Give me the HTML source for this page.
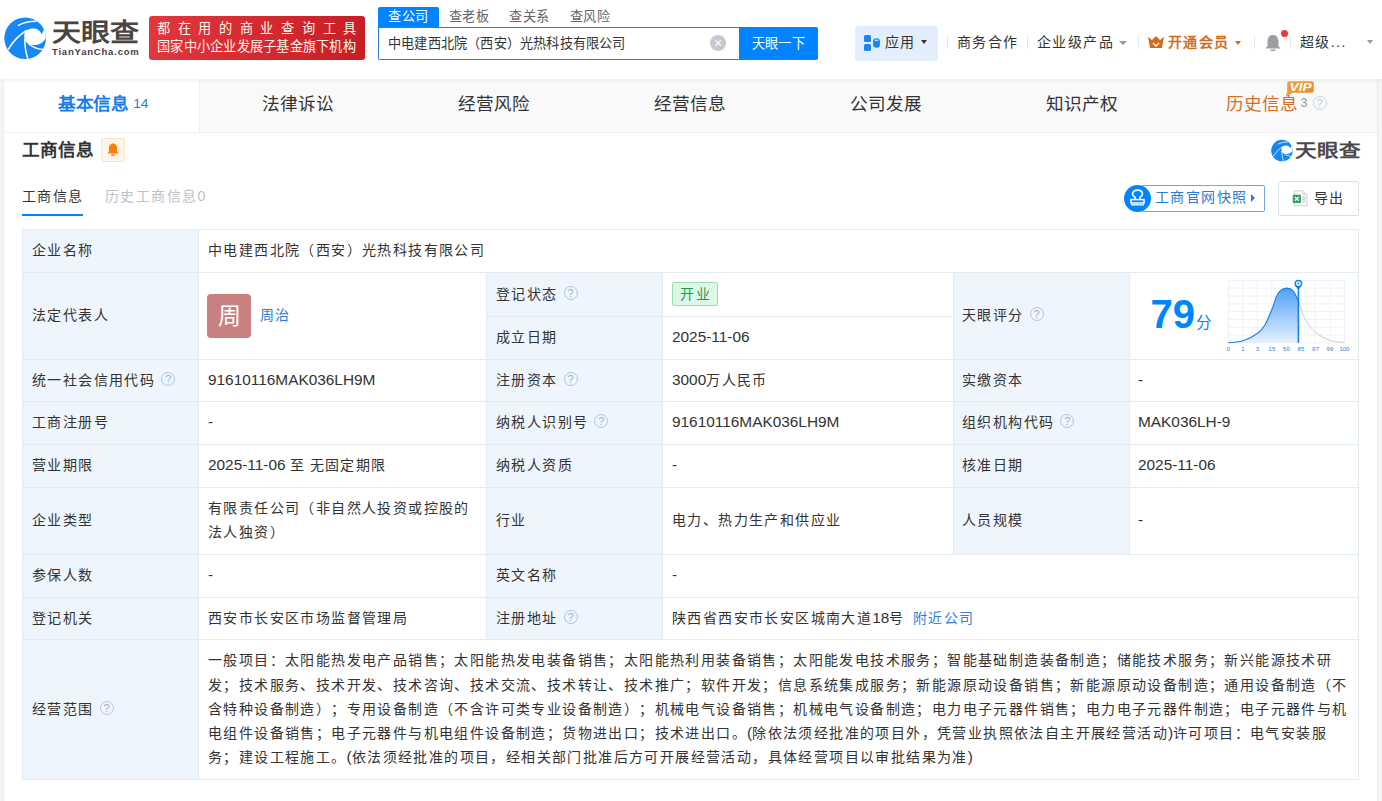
<!DOCTYPE html>
<html lang="zh-CN">
<head>
<meta charset="utf-8">
<style>
*{box-sizing:border-box;margin:0;padding:0}
html,body{width:1382px;height:801px;overflow:hidden}
body{text-spacing-trim:space-all;position:relative;background:#f5f5f5;font-family:"Liberation Sans",sans-serif;color:#333;font-size:15.4px}
.a{position:absolute;white-space:nowrap}
#hdr{position:absolute;left:0;top:0;width:1382px;height:79px;background:#fff;box-shadow:0 1px 5px rgba(0,0,0,.07);z-index:2}
#tabs{position:absolute;left:4px;top:79px;width:1373px;height:53px;background:#f9f9f9}
#card{position:absolute;left:4px;top:132px;width:1373px;height:669px;background:#fff;border-top:1px solid #f0f0f0}
.tab{position:absolute;top:0;height:53px;line-height:50px;width:196px;text-align:center;font-size:17.6px;color:#333}
.sep{position:absolute;top:36px;width:1px;height:13px;background:#e6e6e6}
.bg{position:absolute;background:#eef5fc}
.hl{position:absolute;height:1px;background:#e3ebf4}
.vl{position:absolute;width:1px;background:#e3ebf4}
.t{position:absolute;white-space:nowrap;font-size:14px;color:#333;line-height:20px;letter-spacing:1.4px;margin-top:-1px}
.n{letter-spacing:0;font-size:15.4px}
.q{display:inline-block;width:14px;height:14px;border:1px solid #afc8e4;border-radius:50%;color:#95b4d8;font-size:11px;line-height:12.5px;text-align:center;vertical-align:1.6px;margin-left:6px;letter-spacing:0;font-family:"Liberation Sans",sans-serif}
</style>
</head>
<body>
<div id="hdr">
  <!-- logo -->
  <svg class="a" style="left:0;top:12px" width="50" height="50" viewBox="0 0 800 800">
    <clipPath id="lc"><circle cx="402" cy="420" r="333"/></clipPath>
    <g clip-path="url(#lc)">
    <rect x="0" y="0" width="800" height="800" fill="#1787f5"/>
    <path d="M690,200 C712,255 705,310 662,352 C640,292 592,264 532,264 C462,264 412,292 396,332 C381,382 386,432 411,472 C441,512 501,532 571,527 C651,517 711,472 740,402 L800,402 L800,200 Z" fill="#fff"/>
    <path d="M285,218 Q430,145 585,150" stroke="#fff" stroke-width="24" fill="none"/>
    <path d="M430,292 Q250,400 130,600" stroke="#fff" stroke-width="24" fill="none"/>
    <path d="M396,430 Q398,620 450,760" stroke="#fff" stroke-width="24" fill="none"/>
    <path d="M452,505 Q545,592 690,600" stroke="#fff" stroke-width="24" fill="none"/>
    </g>
  </svg>
  <div class="a" style="left:51.5px;top:14px;font-size:29px;line-height:34px;font-weight:bold;color:#4a4443;letter-spacing:0px;transform:scaleY(0.86);transform-origin:0 28px">天眼查</div>
  <div class="a" style="left:52px;top:46px;font-size:9.5px;line-height:12px;font-weight:bold;color:#47403f;letter-spacing:0.8px">TianYanCha.com</div>
  <!-- banner -->
  <div class="a" style="left:149px;top:16px;width:216px;height:44px;border-radius:3px;background:linear-gradient(100deg,#e2373d,#c81d24)"></div>
  <div class="a" style="left:157px;top:19.5px;font-size:13.2px;line-height:18px;color:#fff6ea;letter-spacing:7.7px">都在用的商业查询工具</div>
  <div class="a" style="left:157px;top:37.5px;font-size:13.2px;line-height:18px;color:#fff6ea;letter-spacing:0.25px">国家中小企业发展子基金旗下机构</div>
  <!-- search -->
  <div class="a" style="left:378px;top:7px;width:61px;height:21px;background:#0084ff;border-radius:2px 2px 0 0"></div>
  <div class="a" style="left:388px;top:6px;font-size:13.2px;letter-spacing:0.6px;line-height:21px;color:#fff">查公司</div>
  <div class="a" style="left:448.5px;top:6px;font-size:13.2px;letter-spacing:0.6px;line-height:21px;color:#666">查老板</div>
  <div class="a" style="left:509px;top:6px;font-size:13.2px;letter-spacing:0.6px;line-height:21px;color:#666">查关系</div>
  <div class="a" style="left:569.5px;top:6px;font-size:13.2px;letter-spacing:0.6px;line-height:21px;color:#666">查风险</div>
  <div class="a" style="left:378px;top:27px;width:362px;height:33px;border:1px solid #2f80d8;border-right:0;border-radius:2px 0 0 2px;background:#fff"></div>
  <div class="a" style="left:388px;top:34px;font-size:13.2px;letter-spacing:0.2px;line-height:20px;color:#333">中电建西北院（西安）光热科技有限公司</div>
  <div class="a" style="left:710px;top:34.5px;width:16px;height:16px;border-radius:50%;background:#c6c9cf;color:#fff;font-size:14px;line-height:16px;text-align:center">×</div>
  <div class="a" style="left:739px;top:27px;width:79px;height:33px;background:#0084ff;border-radius:0 2px 2px 0;color:#fff;font-size:13.2px;letter-spacing:0.3px;line-height:33px;text-align:center">天眼一下</div>
  <!-- nav -->
  <div class="a" style="left:855px;top:26px;width:83px;height:34.5px;border-radius:3px;background:#e2eefc"></div>
  <svg class="a" style="left:864px;top:35px" width="17" height="17" viewBox="0 0 17 17">
    <rect x="0" y="0" width="7" height="7" rx="1.5" fill="#1686f5"/>
    <rect x="0" y="9" width="7" height="7" rx="1.5" fill="#1686f5"/>
    <rect x="9.1" y="3.3" width="6.8" height="9.5" rx="3" fill="#1686f5"/><ellipse cx="12.5" cy="5.2" rx="2" ry="0.8" fill="#cfe6ff"/>
  </svg>
  <div class="a" style="left:885px;top:32px;font-size:14px;letter-spacing:1.4px;line-height:20px;color:#333">应用</div>
  <div class="a" style="left:921px;top:40px;width:0;height:0;border-left:3.6px solid transparent;border-right:3.6px solid transparent;border-top:4.2px solid #333"></div>
  <div class="sep" style="left:947px"></div>
  <div class="a" style="left:957px;top:32px;font-size:14px;letter-spacing:1.4px;line-height:20px;color:#333">商务合作</div>
  <div class="sep" style="left:1027px"></div>
  <div class="a" style="left:1037px;top:32px;font-size:14px;letter-spacing:1.4px;line-height:20px;color:#333">企业级产品</div>
  <div class="a" style="left:1119px;top:41px;width:0;height:0;border-left:4px solid transparent;border-right:4px solid transparent;border-top:4.5px solid #999"></div>
  <div class="sep" style="left:1138px"></div>
  <svg class="a" style="left:1148px;top:36px" width="16" height="12" viewBox="0 0 16 12">
    <path d="M0,1 L4,4 L8,0 L12,4 L16,1 L14,12 L2,12 Z" fill="#d06c1d"/>
    <path d="M5,7 L8,10 L11,7" stroke="#fff" stroke-width="1.4" fill="none"/>
  </svg>
  <div class="a" style="left:1168px;top:32px;font-size:14px;letter-spacing:1.4px;line-height:20px;color:#d06c1d;font-weight:bold">开通会员</div>
  <div class="a" style="left:1235px;top:41px;width:0;height:0;border-left:3.5px solid transparent;border-right:3.5px solid transparent;border-top:4px solid #d06c1d"></div>
  <div class="sep" style="left:1254px"></div>
  <svg class="a" style="left:1265px;top:34px" width="16" height="18" viewBox="0 0 16 18">
    <path d="M8,1 C12,1 13.5,4.5 13.5,8 L13.5,12 L15.5,14.5 L0.5,14.5 L2.5,12 L2.5,8 C2.5,4.5 4,1 8,1 Z" fill="#9a9da3"/>
    <rect x="5.5" y="15.5" width="5" height="1.6" rx="0.8" fill="#9a9da3"/>
  </svg>
  <div class="a" style="left:1281px;top:30px;width:7px;height:7px;border-radius:50%;background:#f0353c"></div>
  <div class="sep" style="left:1290px"></div>
  <div class="a" style="left:1300px;top:32px;font-size:14px;letter-spacing:1.4px;line-height:20px;color:#333">超级...</div>
  <div class="a" style="left:1367px;top:40px;width:0;height:0;border-left:3.5px solid transparent;border-right:3.5px solid transparent;border-top:4px solid #999"></div>
</div>

<div class="a" style="left:3px;top:79px;width:1px;height:722px;background:#ececec"></div><div class="a" style="left:1377px;top:79px;width:1px;height:722px;background:#ececec"></div>
<div id="tabs">
  <div class="tab" style="left:0;background:#fff;color:#1a7ee8;padding-left:2.5px"><b style="letter-spacing:-0.4px">基本信息</b><span style="font-size:13.6px;margin-left:4.5px;position:relative;top:-2.5px">14</span></div>
  <div class="a" style="left:195px;top:0;width:1px;height:53px;background:#f0f0f0"></div><div class="tab" style="left:196px">法律诉讼</div>
  <div class="tab" style="left:392px">经营风险</div>
  <div class="tab" style="left:588px">经营信息</div>
  <div class="tab" style="left:784px">公司发展</div>
  <div class="tab" style="left:980px">知识产权</div>
  <div class="tab" style="left:1174.3px;color:#d0702a">历史信息<span style="font-size:12.6px;color:#999;margin-left:2.5px;position:relative;top:-3px">3</span><span class="q" style="width:14px;height:14px;margin-left:5.3px;vertical-align:3.2px;line-height:12px;font-size:11px;border-color:#c9d0da;color:#c0c7d2">?</span></div>
</div>

<svg class="a" style="left:1284px;top:80px;z-index:3" width="32" height="18" viewBox="0 0 32 18">
  <defs><linearGradient id="vg" x1="0" y1="0" x2="1" y2="1"><stop offset="0" stop-color="#f0a43c"/><stop offset="1" stop-color="#e08f2a"/></linearGradient></defs>
  <path d="M5.2,1.2 L27.8,1.2 Q29.8,1.2 29.8,3.2 L29.8,10.8 Q29.8,12.8 27.8,12.8 L9,12.8 L1.6,16.4 L3.2,11.5 L3.2,3.2 Q3.2,1.2 5.2,1.2 Z" fill="url(#vg)"/>
  <text x="5.6" y="11" textLength="22" lengthAdjust="spacingAndGlyphs" font-family="Liberation Sans" font-weight="bold" font-style="italic" font-size="10" fill="#fff">VIP</text>
</svg>
<div id="card"></div>
<!-- section header -->
<div class="a" style="left:22px;top:139px;font-size:17.6px;line-height:22px;font-weight:bold;color:#333">工商信息</div>
<div class="a" style="left:101px;top:138px;width:24px;height:24px;border:1px solid #ffe3c8;background:#fff4e8;border-radius:2px"></div>
<svg class="a" style="left:107px;top:143px" width="12" height="13" viewBox="0 0 12 13">
  <path d="M6,0.5 C9,0.5 10,3 10,5.5 L10,8.5 L11.5,10.5 L0.5,10.5 L2,8.5 L2,5.5 C2,3 3,0.5 6,0.5 Z" fill="#ff7d00"/>
  <rect x="4" y="11.2" width="4" height="1.6" rx="0.8" fill="#ff7d00"/>
</svg>
<div class="a" style="left:22px;top:186px;font-size:14px;letter-spacing:1.4px;line-height:20px;color:#333">工商信息</div>
<div class="a" style="left:22px;top:214px;width:61px;height:2px;background:#0084ff"></div>
<div class="a" style="left:105px;top:186px;font-size:14px;letter-spacing:1.4px;line-height:20px;color:#bdc1c8">历史工商信息0</div>
<!-- right logo -->
<svg class="a" style="left:1268.52px;top:136.64px" width="25.83" height="25.83" viewBox="0 0 800 800">
    <clipPath id="lc2"><circle cx="402" cy="420" r="333"/></clipPath>
    <g clip-path="url(#lc2)">
    <rect x="0" y="0" width="800" height="800" fill="#1787f5"/>
    <path d="M690,200 C712,255 705,310 662,352 C640,292 592,264 532,264 C462,264 412,292 396,332 C381,382 386,432 411,472 C441,512 501,532 571,527 C651,517 711,472 740,402 L800,402 L800,200 Z" fill="#fff"/>
    <path d="M285,218 Q430,145 585,150" stroke="#fff" stroke-width="24" fill="none"/>
    <path d="M430,292 Q250,400 130,600" stroke="#fff" stroke-width="24" fill="none"/>
    <path d="M396,430 Q398,620 450,760" stroke="#fff" stroke-width="24" fill="none"/>
    <path d="M452,505 Q545,592 690,600" stroke="#fff" stroke-width="24" fill="none"/>
    </g>
  </svg>
<div class="a" style="left:1294.5px;top:137px;font-size:21.5px;line-height:26px;font-weight:bold;color:#4d4949;transform:scaleY(0.84);transform-origin:0 21.5px">天眼查</div>
<!-- snapshot button -->
<div class="a" style="left:1141px;top:185px;width:124px;height:27px;border:1px solid #6ea6e6;border-radius:2px;background:#fff"></div>
<div class="a" style="left:1124px;top:185px;width:27px;height:27px;border-radius:50%;background:#0084ff"></div>
<svg class="a" style="left:1127.5px;top:188.5px" width="19" height="19" viewBox="0 0 19 19">
  <path d="M7,10.5 L7,8.3 C5.3,7.5 4.6,6.1 4.6,4.9 C4.6,2.6 6.6,1.2 9.5,1.2 C12.4,1.2 14.4,2.6 14.4,4.9 C14.4,6.1 13.7,7.5 12,8.3 L12,10.5" stroke="#fff" stroke-width="1.7" fill="none"/>
  <rect x="3" y="10.6" width="13" height="3.4" fill="none" stroke="#fff" stroke-width="1.5"/>
  <rect x="3" y="15" width="13" height="1.6" fill="#d8eaff"/>
</svg>
<div class="a" style="left:1155px;top:186px;font-size:14px;letter-spacing:1.4px;line-height:22px;color:#2a7cd6">工商官网快照</div>
<div class="a" style="left:1251px;top:194px;width:0;height:0;border-top:4px solid transparent;border-bottom:4px solid transparent;border-left:4.5px solid #2a7cd6"></div>
<!-- export button -->
<div class="a" style="left:1278px;top:181px;width:81px;height:35px;border:1px solid #dcdfe6;border-radius:2px;background:#fff"></div>
<svg class="a" style="left:1292px;top:190px" width="16" height="17" viewBox="0 0 16 17">
  <path d="M2.5,0.8 L11.2,0.8 L15,4.6 L15,15.7 L2.5,15.7 Z" fill="#f8f8f8" stroke="#d3d3d3" stroke-width="1"/>
  <path d="M11.2,0.8 L11.2,4.6 L15,4.6" fill="#e8e8e8" stroke="#d3d3d3" stroke-width="0.8"/>
  <rect x="0.8" y="4.8" width="8.1" height="8.1" rx="0.6" fill="#36a062"/>
  <path d="M2.9,6.9 L6.8,10.8 M6.8,6.9 L2.9,10.8" stroke="#fff" stroke-width="1.3"/>
  <path d="M10.3,7.2 L13.3,7.2 M10.3,9.2 L13.3,9.2 M10.3,11.2 L13.3,11.2" stroke="#b9b9b9" stroke-width="0.9"/>
</svg>
<div class="a" style="left:1314px;top:187px;font-size:14px;letter-spacing:1.4px;line-height:22px;color:#333">导出</div>

<div id="tbl">
<div class="bg" style="left:22px;top:229px;width:176px;height:550px"></div>
<div class="bg" style="left:486px;top:272px;width:176px;height:367px"></div>
<div class="bg" style="left:953px;top:272px;width:176px;height:282px"></div>
<div class="hl" style="left:22px;top:229px;width:1337px"></div>
<div class="hl" style="left:22px;top:272px;width:1337px"></div>
<div class="hl" style="left:22px;top:359px;width:1337px"></div>
<div class="hl" style="left:22px;top:401px;width:1337px"></div>
<div class="hl" style="left:22px;top:444px;width:1337px"></div>
<div class="hl" style="left:22px;top:487px;width:1337px"></div>
<div class="hl" style="left:22px;top:554px;width:1337px"></div>
<div class="hl" style="left:22px;top:597px;width:1337px"></div>
<div class="hl" style="left:22px;top:639px;width:1337px"></div>
<div class="hl" style="left:22px;top:779px;width:1337px"></div>
<div class="hl" style="left:486px;top:316px;width:468px"></div>
<div class="vl" style="left:22px;top:229px;height:551px"></div>
<div class="vl" style="left:1358px;top:229px;height:551px"></div>
<div class="vl" style="left:198px;top:229px;height:551px"></div>
<div class="vl" style="left:486px;top:272px;height:368px"></div>
<div class="vl" style="left:662px;top:272px;height:368px"></div>
<div class="vl" style="left:953px;top:272px;height:283px"></div>
<div class="vl" style="left:1129px;top:272px;height:283px"></div>
<div class="t" style="left:32px;top:241.0px;">企业名称</div>
<div class="t" style="left:208px;top:241.0px;">中电建西北院（西安）光热科技有限公司</div>
<div class="t" style="left:32px;top:306.0px;">法定代表人</div>
<div class="a" style="left:207px;top:294px;width:44px;height:44px;border-radius:4px;background:#c98080;color:#fff;font-size:23px;line-height:44px;text-align:center">周</div>
<div class="t" style="left:260px;top:306px;color:#2a7cd6">周治</div>
<div class="t" style="left:496px;top:284.5px;">登记状态<span class="q">?</span></div>
<div class="a" style="left:672px;top:282px;width:46px;height:24px;border:1px solid #9bdcb2;border-radius:2px;background:#ddf8e7;color:#1f9a50;font-size:14px;letter-spacing:1.4px;text-indent:1.4px;line-height:22px;text-align:center">开业</div>
<div class="t" style="left:496px;top:328px;">成立日期</div>
<div class="t" style="left:672px;top:328px;;letter-spacing:0;font-size:15.4px">2025-11-06</div>
<div class="t" style="left:962px;top:306px;">天眼评分<span class="q">?</span></div>
<div class="t" style="left:32px;top:370.5px;">统一社会信用代码<span class="q">?</span></div>
<div class="t" style="left:208px;top:370.5px;;letter-spacing:0;font-size:15.4px">91610116MAK036LH9M</div>
<div class="t" style="left:496px;top:370.5px;">注册资本<span class="q">?</span></div>
<div class="t" style="left:672px;top:370.5px;"><span class="n">3000</span>万人民币</div>
<div class="t" style="left:962px;top:370.5px;">实缴资本</div>
<div class="t" style="left:1138px;top:370.5px;;letter-spacing:0;font-size:15.4px">-</div>
<div class="t" style="left:32px;top:413.0px;">工商注册号</div>
<div class="t" style="left:208px;top:413.0px;;letter-spacing:0;font-size:15.4px">-</div>
<div class="t" style="left:496px;top:413.0px;">纳税人识别号<span class="q">?</span></div>
<div class="t" style="left:672px;top:413.0px;;letter-spacing:0;font-size:15.4px">91610116MAK036LH9M</div>
<div class="t" style="left:962px;top:413.0px;">组织机构代码<span class="q">?</span></div>
<div class="t" style="left:1138px;top:413.0px;;letter-spacing:0;font-size:15.4px">MAK036LH-9</div>
<div class="t" style="left:32px;top:456.0px;">营业期限</div>
<div class="t" style="left:208px;top:456.0px;"><span class="n">2025-11-06 </span>至<span class="n"> </span>无固定期限</div>
<div class="t" style="left:496px;top:456.0px;">纳税人资质</div>
<div class="t" style="left:672px;top:456.0px;;letter-spacing:0;font-size:15.4px">-</div>
<div class="t" style="left:962px;top:456.0px;">核准日期</div>
<div class="t" style="left:1138px;top:456.0px;;letter-spacing:0;font-size:15.4px">2025-11-06</div>
<div class="t" style="left:32px;top:511.0px;">企业类型</div>
<div class="t" style="left:208px;top:496.8px;line-height:24.2px">有限责任公司（非自然人投资或控股的<br>法人独资）</div>
<div class="t" style="left:496px;top:511.0px;">行业</div>
<div class="t" style="left:672px;top:511.0px;">电力、热力生产和供应业</div>
<div class="t" style="left:962px;top:511.0px;">人员规模</div>
<div class="t" style="left:1138px;top:511.0px;;letter-spacing:0;font-size:15.4px">-</div>
<div class="t" style="left:32px;top:566.0px;">参保人数</div>
<div class="t" style="left:208px;top:566.0px;;letter-spacing:0;font-size:15.4px">-</div>
<div class="t" style="left:496px;top:566.0px;">英文名称</div>
<div class="t" style="left:672px;top:566.0px;;letter-spacing:0;font-size:15.4px">-</div>
<div class="t" style="left:32px;top:608.5px;">登记机关</div>
<div class="t" style="left:208px;top:608.5px;">西安市长安区市场监督管理局</div>
<div class="t" style="left:496px;top:608.5px;">注册地址<span class="q">?</span></div>
<div class="t" style="left:672px;top:608.5px;">陕西省西安市长安区城南大道<span class="n">18</span>号<span style="color:#2f80d9;margin-left:8px">附近公司</span></div>
<div class="t" style="left:32px;top:699.5px;">经营范围<span class="q">?</span></div>
<div class="t" style="left:208px;top:649.3px;line-height:24.2px">一般项目：太阳能热发电产品销售；太阳能热发电装备销售；太阳能热利用装备销售；太阳能发电技术服务；智能基础制造装备制造；储能技术服务；新兴能源技术研<br>发；技术服务、技术开发、技术咨询、技术交流、技术转让、技术推广；软件开发；信息系统集成服务；新能源原动设备销售；新能源原动设备制造；通用设备制造（不<br>含特种设备制造）；专用设备制造（不含许可类专业设备制造）；机械电气设备销售；机械电气设备制造；电力电子元器件销售；电力电子元器件制造；电子元器件与机<br>电组件设备销售；电子元器件与机电组件设备制造；货物进出口；技术进出口。<span class="n">(</span>除依法须经批准的项目外，凭营业执照依法自主开展经营活动<span class="n">)</span>许可项目：电气安装服<br>务；建设工程施工。<span class="n">(</span>依法须经批准的项目，经相关部门批准后方可开展经营活动，具体经营项目以审批结果为准<span class="n">)</span></div>
<div class="a" style="left:1150.5px;top:291px;font-size:40px;line-height:46px;font-weight:bold;color:#0084ff">79</div>
<div class="a" style="left:1196px;top:312.5px;font-size:15.4px;line-height:20px;color:#0084ff">分</div>
<svg class="a" style="left:1224px;top:276px" width="132" height="80" viewBox="0 0 132 80">
<defs><linearGradient id="cg" x1="0" y1="0" x2="0" y2="1"><stop offset="0" stop-color="#4fa1f6"/><stop offset="1" stop-color="#e6f1fd"/></linearGradient></defs>
<g transform="translate(4.4,4.4)">
<g stroke="#eef2f7" stroke-width="1"><line x1="0.0" y1="0" x2="0.0" y2="62.5"/><line x1="14.5" y1="0" x2="14.5" y2="62.5"/><line x1="29.0" y1="0" x2="29.0" y2="62.5"/><line x1="43.5" y1="0" x2="43.5" y2="62.5"/><line x1="58.0" y1="0" x2="58.0" y2="62.5"/><line x1="72.5" y1="0" x2="72.5" y2="62.5"/><line x1="87.0" y1="0" x2="87.0" y2="62.5"/><line x1="101.5" y1="0" x2="101.5" y2="62.5"/><line x1="116.0" y1="0" x2="116.0" y2="62.5"/><line x1="0" y1="0.0" x2="116" y2="0.0"/><line x1="0" y1="7.8" x2="116" y2="7.8"/><line x1="0" y1="15.6" x2="116" y2="15.6"/><line x1="0" y1="23.4" x2="116" y2="23.4"/><line x1="0" y1="31.2" x2="116" y2="31.2"/><line x1="0" y1="39.1" x2="116" y2="39.1"/><line x1="0" y1="46.9" x2="116" y2="46.9"/><line x1="0" y1="54.7" x2="116" y2="54.7"/><line x1="0" y1="62.5" x2="116" y2="62.5"/></g>
<path d="M0.0,62.3 C2.4,62.0 9.8,62.0 14.7,60.4 C19.6,58.8 25.5,55.5 29.2,52.8 C32.9,50.1 34.2,48.6 36.7,44.3 C39.2,40.0 42.5,31.5 44.3,27.0 C46.1,22.5 46.2,20.2 47.5,17.4 C48.8,14.6 50.0,12.0 51.8,10.4 C53.6,8.8 56.1,7.7 58.2,7.7 C60.4,7.7 62.7,8.2 64.7,10.4 C66.7,12.6 69.1,18.9 70.0,20.6 L70,62.5 L0,62.5 Z" fill="url(#cg)"/>
<path d="M0.0,62.3 C2.4,62.0 9.8,62.0 14.7,60.4 C19.6,58.8 25.5,55.5 29.2,52.8 C32.9,50.1 34.2,48.6 36.7,44.3 C39.2,40.0 42.5,31.5 44.3,27.0 C46.1,22.5 46.2,20.2 47.5,17.4 C48.8,14.6 50.0,12.0 51.8,10.4 C53.6,8.8 56.1,7.7 58.2,7.7 C60.4,7.7 62.7,8.2 64.7,10.4 C66.7,12.6 69.1,18.9 70.0,20.6" fill="none" stroke="#1a7ee8" stroke-width="1.1"/>
<path d="M70.0,20.6 C70.5,22.2 72.0,27.1 73.3,30.3 C74.5,33.5 75.2,36.4 77.5,40.0 C79.8,43.6 83.0,48.5 87.0,51.8 C91.0,55.1 96.4,58.0 101.2,59.8 C106.0,61.5 113.5,61.9 116.0,62.3" fill="none" stroke="#c9cdd3" stroke-width="1"/>
<line x1="70" y1="5" x2="70" y2="62.5" stroke="#1a7ee8" stroke-width="1.6"/>
<path d="M67.2,5.5 L70,9.5 L72.8,5.5 Z" fill="#1a7ee8"/>
<circle cx="70" cy="3.2" r="3.2" fill="#fff" stroke="#1a7ee8" stroke-width="1.5"/>
<circle cx="70" cy="3.2" r="1" fill="#1a7ee8"/>
<g font-family="Liberation Sans" font-size="6" fill="#2a7fd6"><text x="0.0" y="70.5" text-anchor="middle">0</text><text x="14.5" y="70.5" text-anchor="middle">1</text><text x="29.0" y="70.5" text-anchor="middle">3</text><text x="43.5" y="70.5" text-anchor="middle">15</text><text x="58.0" y="70.5" text-anchor="middle">50</text><text x="72.5" y="70.5" text-anchor="middle">85</text><text x="87.0" y="70.5" text-anchor="middle">97</text><text x="101.5" y="70.5" text-anchor="middle">99</text><text x="116.0" y="70.5" text-anchor="middle">100</text></g>
</g></svg>
</div>
</body>
</html>
